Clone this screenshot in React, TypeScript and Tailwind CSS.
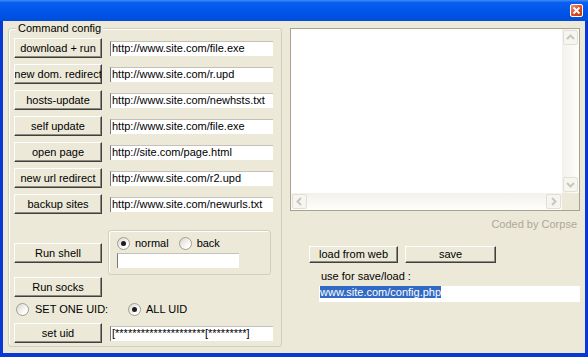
import React from 'react';

const Btn: React.FC<{ label: string; className?: string }> = ({ label, className = '' }) => (
  <button
    type="button"
    className={`flex items-center justify-center bg-[#ece9d8] border border-t-white border-l-white border-r-[#404040] border-b-[#404040] shadow-[inset_-1px_-1px_0_#8d8b80] text-[11px] leading-[13px] text-black whitespace-nowrap overflow-hidden ${className}`}
  >
    {label}
  </button>
);

const Edit: React.FC<{ value?: React.ReactNode; className?: string }> = ({ value, className = '' }) => (
  <div
    className={`bg-white border-t border-l border-t-[#c4c2b8] border-l-[#7a7a7a] pl-[1px] text-[11px] leading-[13px] text-black whitespace-nowrap overflow-hidden ${className}`}
  >
    {value}
  </div>
);

const Radio: React.FC<{ checked?: boolean }> = ({ checked }) => (
  <span className="w-[13px] h-[13px] shrink-0 rounded-full border border-[#a09e93] bg-[linear-gradient(135deg,#d8d6cc,#ffffff_75%)] flex items-center justify-center">
    {checked && <span className="w-[5px] h-[5px] rounded-full bg-[#1e1e1e]" />}
  </span>
);

const Chevron: React.FC<{ dir: 'up' | 'down' | 'left' | 'right' }> = ({ dir }) => {
  const d = {
    up: 'M3 8 L6.5 4.5 L10 8',
    down: 'M3 5 L6.5 8.5 L10 5',
    left: 'M8 3 L4.5 6.5 L8 10',
    right: 'M5 3 L8.5 6.5 L5 10',
  }[dir];
  return (
    <div className="w-[15px] h-[15px] m-[1px] rounded-[2px] border border-[#e2e0d6] bg-[#f6f5f0] flex items-center justify-center">
      <svg width="13" height="13" viewBox="0 0 13 13">
        <path d={d} fill="none" stroke="#c9c7bc" strokeWidth="2" />
      </svg>
    </div>
  );
};

const rows = [
  ['download + run', 'http://www.site.com/file.exe'],
  ['new dom. redirect', 'http://www.site.com/r.upd'],
  ['hosts-update', 'http://www.site.com/newhsts.txt'],
  ['self update', 'http://www.site.com/file.exe'],
  ['open page', 'http://site.com/page.html'],
  ['new url redirect', 'http://www.site.com/r2.upd'],
  ['backup sites', 'http://www.site.com/newurls.txt'],
];

export default function App() {
  return (
    <div className="w-[588px] h-[357px] bg-[#0838d6] flex flex-col font-['Liberation_Sans',Arial,sans-serif] text-black">
      {/* title bar */}
      <div className="h-[21px] shrink-0 flex items-center justify-end pr-[5px] bg-[linear-gradient(to_bottom,#3d8ef7_0%,#0a5ef0_12%,#0055e8_55%,#004ddc_100%)]">
        <div className="w-[13px] h-[13px] rounded-[2px] border border-white bg-[linear-gradient(135deg,#f09070,#d8471c_60%,#c33a12)] flex items-center justify-center">
          <svg width="9" height="9" viewBox="0 0 9 9">
            <path d="M1.5 1.5 L7.5 7.5 M7.5 1.5 L1.5 7.5" stroke="white" strokeWidth="1.8" />
          </svg>
        </div>
      </div>

      {/* body */}
      <div className="flex-1 mx-[3px] mb-[4px] bg-[#ece9d8] flex pl-[5px] pt-[7px]">
        {/* Command config group */}
        <div className="relative w-[274px] h-[319px] border border-[#d0d0bf] rounded-[3px] shadow-[inset_1px_1px_0_#ffffff] pl-[5px] pt-[9px] flex flex-col">
          <span className="absolute -top-[7px] left-[7px] px-[2px] bg-[#ece9d8] text-[11px] leading-[13px]">Command config</span>

          <div className="flex flex-col gap-[6px]">
            {rows.map(([label, url]) => (
              <div key={label} className="flex items-center gap-[8px]">
                <Btn label={label} className="w-[88px] h-[20px]" />
                <Edit value={url} className="w-[163px] h-[15px]" />
              </div>
            ))}
          </div>

          <div className="mt-[16px] flex items-start">
            <Btn label="Run shell" className="mt-[13px] w-[88px] h-[20px]" />
            <div className="ml-[6px] w-[163px] h-[45px] border border-[#d0d0bf] rounded-[3px] shadow-[inset_1px_1px_0_#ffffff] pl-[8px] pt-[6px] flex flex-col">
              <div className="h-[13px] flex items-center text-[11px] leading-[13px]">
                <Radio checked />
                <span className="ml-[5px]">normal</span>
                <span className="ml-[10px]"><Radio /></span>
                <span className="ml-[5px]">back</span>
              </div>
              <Edit className="mt-[3px] w-[122px] h-[15px]" />
            </div>
          </div>

          <Btn label="Run socks" className="mt-[2px] w-[88px] h-[20px]" />

          <div className="mt-[6px] h-[13px] flex items-center text-[11px] leading-[13px]">
            <div className="w-[112px] ml-[2px] flex items-center">
              <Radio />
              <span className="ml-[6px]">SET ONE UID:</span>
            </div>
            <Radio checked />
            <span className="ml-[5px]">ALL UID</span>
          </div>

          <div className="mt-[7px] flex items-center gap-[8px]">
            <Btn label="set uid" className="w-[88px] h-[20px]" />
            <Edit value="[*********************[*********]" className="w-[163px] h-[15px]" />
          </div>
        </div>

        {/* right side */}
        <div className="ml-[8px] w-[290px] flex flex-col">
          <div className="h-[183px] border border-[#a5a292] bg-white flex flex-col">
            <div className="flex-1 flex">
              <div className="flex-1" />
              <div className="w-[17px] flex flex-col bg-[linear-gradient(to_right,#f3f1ec,#fefefb)]">
                <Chevron dir="up" />
                <div className="flex-1" />
                <Chevron dir="down" />
              </div>
            </div>
            <div className="h-[17px] flex">
              <div className="flex-1 flex bg-[linear-gradient(to_bottom,#f3f1ec,#fefefb)]">
                <Chevron dir="left" />
                <div className="flex-1" />
                <Chevron dir="right" />
              </div>
              <div className="w-[17px] bg-[#ece9d8]" />
            </div>
          </div>

          <div className="mt-[7px] pr-[3px] text-right text-[11px] leading-[13px] text-[#aca899]">Coded by Corpse</div>

          <div className="mt-[15px] pl-[19px] flex gap-[7px]">
            <Btn label="load from web" className="w-[89px] h-[17px]" />
            <Btn label="save" className="w-[91px] h-[17px]" />
          </div>

          <div className="mt-[7px] pl-[31px] text-[11px] leading-[13px]">use for save/load :</div>

          <Edit
            value={<span className="bg-[#316ac5] text-white">www.site.com/config.php</span>}
            className="mt-[3px] ml-[29px] w-[261px] h-[16px] border-t-0 border-l-0"
          />
        </div>
      </div>
    </div>
  );
}
